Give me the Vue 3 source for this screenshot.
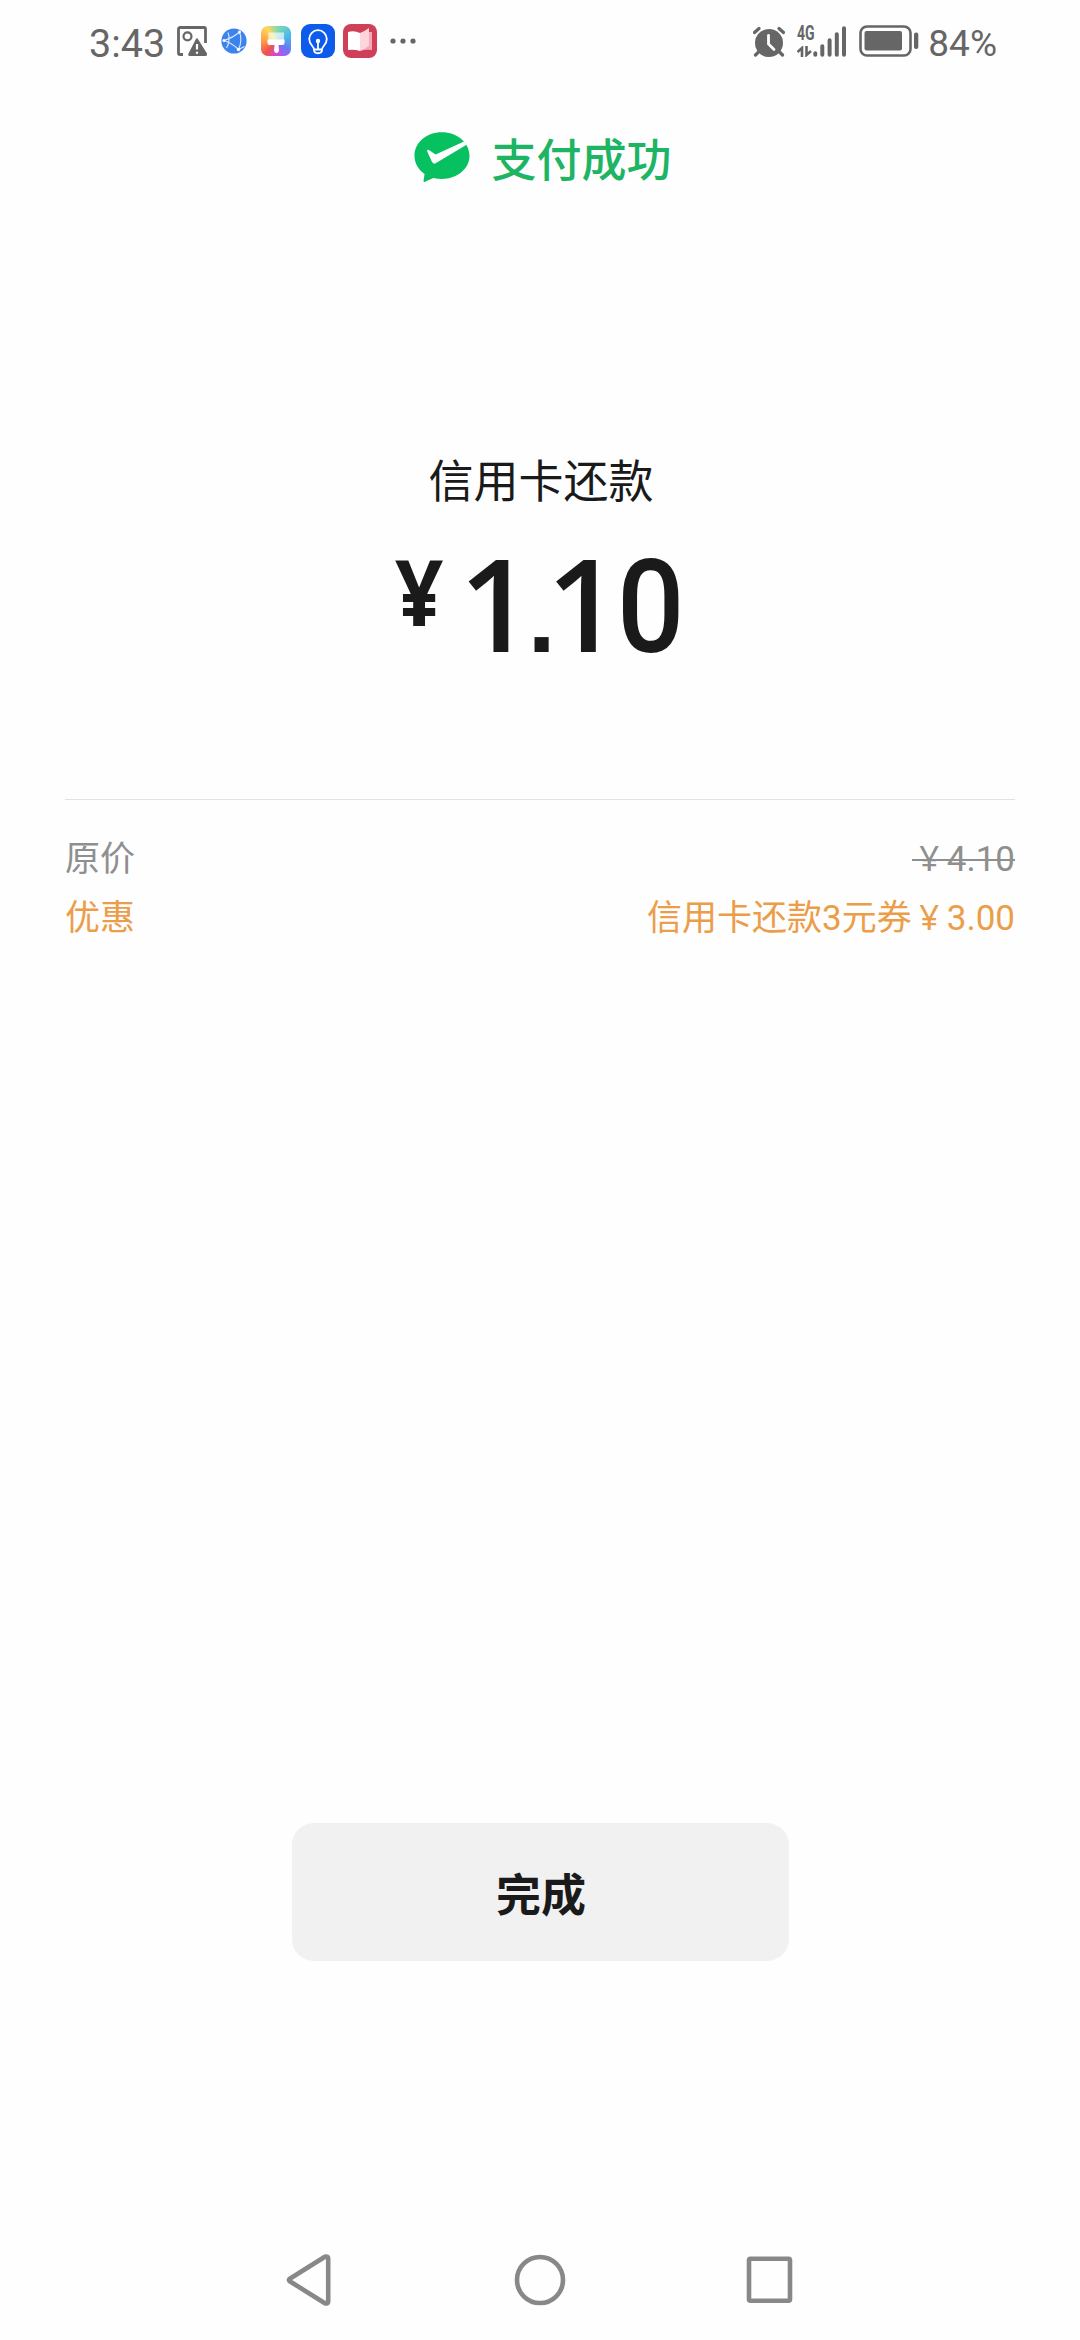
<template>
  <div class="screen">
    <!-- 状态栏 -->
    <header class="status-bar">
      <div class="status-left">
        <span class="time">3:43</span>
        <svg class="icon-picture" viewBox="0 0 30 30">
          <path d="M6 28.5H3a1.5 1.5 0 0 1-1.5-1.500V3A1.500 1.500 0 0 1 3 1.500h24A1.500 1.500 0 0 1 28.500 3v14" fill="none" stroke="#666" stroke-width="2.8" />
          <circle cx="10.500" cy="10.300" r="4" fill="none" stroke="#666" stroke-width="2.200" />
          <path d="M20.300 12 30 27.500Q30.500 30 28.500 30H13Q10.500 30 11.500 27.500L18.700 13.500Q20 11 21.300 13.500Z" fill="#666" />
          <path d="M20 18v5.500M20 25.700v2" stroke="#fff" stroke-width="2.200" />
        </svg>
        <svg class="icon-globe" viewBox="0 0 26 26">
          <circle cx="13" cy="13" r="12.600" fill="#3d83ee" />
          <g fill="none" stroke="#dbe9ff" stroke-width="1.100">
            <path d="M3 12.500C8 11 14 8 18.500 4M18.500 4C20.500 9 20 16 17.500 21.500M3 12.500C8 14 14 18 17.500 21.500M5.500 20C8 16 9 9 7 4.500M17.500 21.500l6-3" />
          </g>
          <circle cx="18.500" cy="4" r="1.500" fill="#fff" />
          <circle cx="3" cy="12.500" r="1.500" fill="#fff" />
          <circle cx="17.500" cy="21.500" r="1.700" fill="#fff" />
        </svg>
        <div class="icon-brush">
          <svg viewBox="0 0 30 30">
            <path d="M7.500 6.500h15.500v8H7.500z" fill="#fff" opacity="0.65" />
            <path d="M6.500 13.500h17v3.500q0 2-2 2h-4l.5 5.500q-.5 2.500-2.500 2.500t-2.500-2.500l.5-5.500H8.500q-2 0-2-2z" fill="#fff" />
          </svg>
        </div>
        <svg class="icon-bulb" viewBox="0 0 34 34">
          <rect width="34" height="34" rx="9" fill="#0d5bea" />
          <g fill="none" stroke="#fff" stroke-width="1.800" stroke-linecap="round">
            <path d="M13 25.500c0-3.500-4.800-4.500-4.800-10.500a8.800 8.800 0 0 1 17.600 0c0 6-4.800 7-4.800 10.500zM13 25.500c0 5 8 5 8 0M17 18v7" />
          </g>
          <circle cx="17" cy="17" r="2.200" fill="#fff" />
        </svg>
        <svg class="icon-book" viewBox="0 0 34 34">
          <rect width="34" height="34" rx="8" fill="#cf4058" />
          <path d="M5 8q6-2 12 1v18q-6-2-12-1z" fill="#fff" />
          <path d="M26 8h3v18q-6-1-12 1 5-3 9-5z" fill="#f4a9b5" />
          <path d="M17 9q5-2 9-5v18q-4 3-9 5z" fill="#ffd5dc" />
        </svg>
        <svg class="icon-more" viewBox="0 0 26 6">
          <circle v-for="x in [3, 13, 23]" :key="x" :cx="x" cy="3" r="2.600" fill="#666" />
        </svg>
      </div>

      <div class="status-right">
        <svg class="icon-alarm" viewBox="0 0 32 31">
          <circle cx="16" cy="17" r="14" fill="#666" />
          <path d="M1.500 6.500 6 2.500M30.500 6.500 26 2.500M5.500 26l-3 3M26.500 26l3 3" stroke="#666" stroke-width="3.200" stroke-linecap="round" />
          <path d="M15.500 9.500V18l5.500 5.500" fill="none" stroke="#fff" stroke-width="2.800" stroke-linecap="round" />
        </svg>
        <div class="signal">
          <div class="network">
            <span>4G</span>
            <svg viewBox="0 0 16 11">
              <path d="M5 11V2L.5 6M9.500 0v9l4.500-4" fill="none" stroke="#666" stroke-width="2.600" />
            </svg>
          </div>
          <svg class="bars" viewBox="0 0 33 31">
            <path d="M2.300 28.800v-1.500M9.300 28.800v-8.500M16.600 28.800v-14.500M23.800 28.800V8.300M31 28.800V2.300" stroke="#666" stroke-width="4" stroke-linecap="round" />
          </svg>
        </div>
        <svg class="icon-battery" viewBox="0 0 60 32">
          <rect x="1.500" y="1.500" width="50" height="29" rx="6.500" fill="none" stroke="#666" stroke-width="2.600" />
          <rect x="5.500" y="6" width="37.500" height="19.500" rx="2" fill="#666" />
          <rect x="55" y="7.500" width="4.300" height="16.500" rx="2" fill="#666" />
        </svg>
        <span class="percent">84%</span>
      </div>
    </header>

    <!-- 支付结果 -->
    <div class="result">
      <svg class="icon-pay" viewBox="0 0 166 149">
        <path d="M82.500 1C128 1 165 32 165 71s-37 69-82.500 69q-13 0-25-3L32 148q-4 2-4-2l3-21C13 113 1 93 1 71 1 32 37 1 82.500 1z" fill="#07c160" />
        <path d="M39 58q-2-7 5-4l20 13 83-38q5-1 8 8v2L64 93q-7 4-11-4z" fill="#fff" />
      </svg>
      <span>支付成功</span>
    </div>

    <main class="payment">
      <div class="payee">信用卡还款</div>
      <div class="amount">
        <span class="yen">¥</span>
        <span class="digits">1<span class="point">.</span>1<span class="zero">0</span></span>
      </div>
    </main>

    <section class="details">
      <div class="row">
        <span>原价</span>
        <span class="origin-price"><span class="currency">¥</span>4.10</span>
      </div>
      <div class="row discount">
        <span>优惠</span>
        <span>信用卡还款3元券<span class="currency">¥</span>3.00</span>
      </div>
    </section>

    <button class="done">完成</button>

    <!-- 系统导航栏 -->
    <nav class="nav-bar">
      <svg viewBox="0 0 56 56">
        <path d="M7.800 26.700 43 4.700Q46.200 3.700 46.200 6.500v43q0 2.800-3.200 1.800L7.800 29.300Q6 28 7.800 26.700z" />
      </svg>
      <svg viewBox="0 0 56 56">
        <circle cx="28" cy="28" r="23" />
      </svg>
      <svg viewBox="0 0 56 56">
        <rect x="7" y="6.700" width="41" height="42" rx="1.500" />
      </svg>
    </nav>
  </div>
</template>

<script setup>
</script>

<style>
body {
  background: #fefefe;
}
</style>

<style scoped>
.screen {
  display: flex;
  flex-direction: column;
  width: 1080px;
  height: 2340px;
  background: #fefefe;
  font-family: Roboto, "Noto Sans CJK SC", sans-serif;
  color: #1a1a1a;
  overflow: hidden;
}

svg {
  display: block;
  flex: none;
}

.status-bar {
  display: flex;
  justify-content: space-between;
  height: 82px;
  padding: 0 83px 0 89px;
  color: #666;
}

.status-left,
.status-right {
  display: flex;
  align-items: center;
}

.time {
  width: 88px;
  padding-top: 5px;
  font-size: 39.5px;
  line-height: 44px;
}

.icon-picture {
  width: 30px;
  height: 30px;
  margin-right: 14px;
}

.icon-globe {
  width: 26px;
  height: 26px;
  margin-right: 14px;
}

.icon-brush {
  width: 30px;
  height: 30px;
  margin-right: 10px;
  border-radius: 7px;
  background: conic-gradient(from 0deg, #8edba5, #47b8ef 70deg, #6a79f5 125deg, #c74be8 170deg, #f0524f 220deg, #ff9c45 270deg, #ffd75a 325deg, #8edba5);
}

.icon-bulb,
.icon-book {
  width: 34px;
  height: 34px;
  margin-right: 8px;
}

.icon-more {
  width: 26px;
  height: 6px;
  margin-left: 5px;
}

.icon-alarm {
  width: 32px;
  height: 31px;
  margin-right: 12px;
}

.signal {
  display: flex;
  align-items: flex-end;
  width: 50px;
  height: 31px;
  margin-right: 12px;
}

.network {
  display: flex;
  flex-direction: column;
  justify-content: space-between;
  width: 16px;
  height: 31px;
}

.network span {
  font-size: 20px;
  font-weight: 700;
  line-height: 14px;
  transform: scaleX(0.7);
  transform-origin: left;
}

.network svg {
  width: 16px;
  height: 11px;
}

.bars {
  width: 33px;
  height: 31px;
}

.icon-battery {
  width: 60px;
  height: 32px;
  margin-right: 9px;
}

.percent {
  padding-top: 5px;
  font-size: 37px;
  line-height: 44px;
}

.result {
  display: flex;
  align-items: center;
  justify-content: center;
  gap: 21px;
  height: 66px;
  margin-top: 42px;
  padding-left: 6px;
  color: #1db464;
  font-size: 45px;
  font-weight: 500;
}

.icon-pay {
  width: 56px;
  height: 50px;
}

.payment {
  display: flex;
  flex-direction: column;
  align-items: center;
  height: 609px;
  padding-top: 260px;
  box-sizing: border-box;
}

.payee {
  padding-left: 2px;
  font-size: 45px;
  line-height: 66px;
}

.amount {
  display: flex;
  align-items: flex-start;
  width: 290px;
  height: 130px;
  margin-top: 21px;
  font-family: "Open Sans", "Noto Sans", sans-serif;
  font-weight: 700;
}

.yen {
  flex: none;
  width: 64px;
  padding-top: 2px;
  font-size: 91px;
  line-height: 104px;
  letter-spacing: -2px;
  transform: scaleX(0.93);
  transform-origin: left;
}

.digits {
  flex: none;
  font-size: 129px;
  font-weight: 600;
  line-height: 130px;
  letter-spacing: -12px;
  white-space: nowrap;
}

.point {
  margin-left: 7px;
  font-family: "Liberation Sans", sans-serif;
  font-size: 100px;
  font-weight: 700;
  letter-spacing: -9px;
}

.zero {
  display: inline-block;
  margin-left: 9px;
  font-family: Roboto, sans-serif;
  font-weight: 500;
  letter-spacing: 0;
  transform: scaleX(0.92);
  transform-origin: left;
}

.details {
  height: 1024px;
  box-sizing: border-box;
  margin: 0 65px;
  padding-top: 30px;
  border-top: 1px solid #e2e2e2;
}

.row {
  display: flex;
  justify-content: space-between;
  height: 59px;
  color: #8f8f8f;
  font-size: 35px;
  line-height: 59px;
}

.discount {
  color: #eb9d49;
}

.currency {
  display: inline-block;
  width: 35px;
  font-family: "Noto Sans", sans-serif;
  line-height: 40px;
  text-align: center;
}

.origin-price {
  height: 59px;
  background: linear-gradient(#8f8f8f, #8f8f8f) 0 29px / 100% 2px no-repeat;
}

.done {
  align-self: center;
  width: 497px;
  height: 138px;
  padding: 0 0 0 2px;
  border: none;
  border-radius: 22px;
  background: #f1f1f1;
  color: #1a1a1a;
  font-family: "Noto Sans CJK SC", sans-serif;
  font-size: 45px;
  font-weight: 700;
}

.nav-bar {
  display: flex;
  justify-content: space-between;
  width: 516px;
  margin: 291px auto 0;
}

.nav-bar svg {
  width: 56px;
  height: 56px;
  fill: none;
  stroke: #888;
  stroke-width: 4.6;
}
</style>
